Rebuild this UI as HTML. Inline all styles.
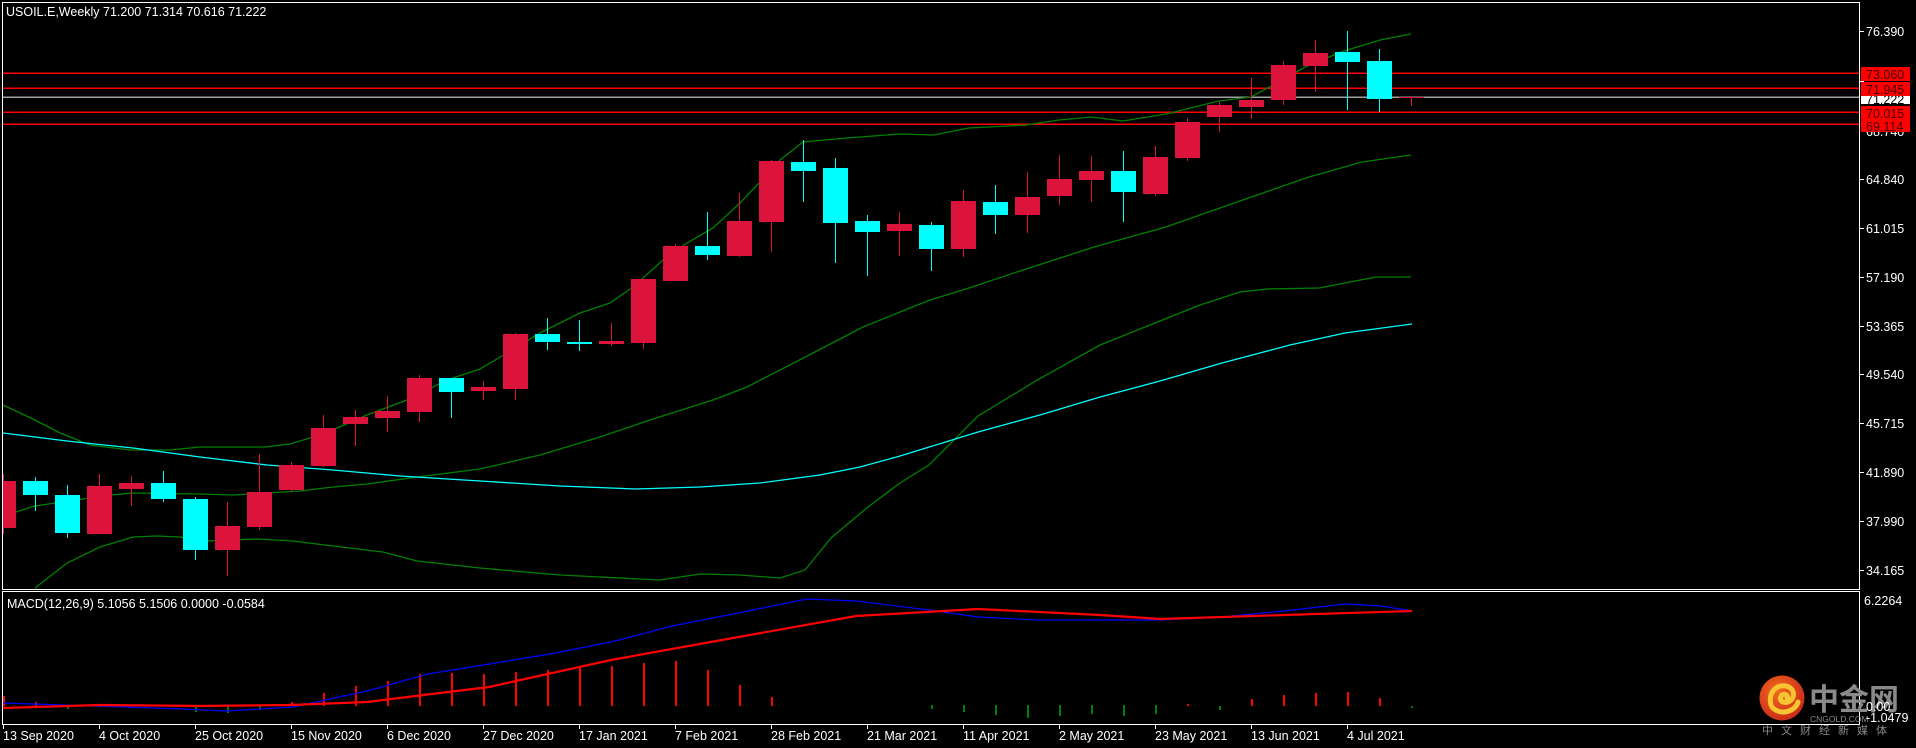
<!DOCTYPE html>
<html><head><meta charset="utf-8"><style>
html,body{margin:0;padding:0;background:#000;width:1916px;height:748px;overflow:hidden}
svg{display:block}
text{font-family:"Liberation Sans","Noto Sans CJK SC",sans-serif;font-size:12.5px;fill:#fff}
</style></head><body>
<svg width="1916" height="748" viewBox="0 0 1916 748" xmlns="http://www.w3.org/2000/svg" shape-rendering="crispEdges">
<rect width="1916" height="748" fill="#000"/>
<!-- frames -->
<rect x="2.5" y="2.5" width="1857" height="587" fill="none" stroke="#fff"/>
<rect x="2.5" y="591.5" width="1857" height="133" fill="none" stroke="#fff"/>

<!-- horizontal levels -->
<g stroke-width="1.5">
<line x1="3" x2="1859" y1="73" y2="73" stroke="#ff0000"/>
<line x1="3" x2="1859" y1="88" y2="88" stroke="#ff0000"/>
<line x1="3" x2="1859" y1="97" y2="97" stroke="#a0a0a0"/>
<line x1="3" x2="1859" y1="112" y2="112" stroke="#ff0000"/>
<line x1="3" x2="1859" y1="124" y2="124" stroke="#ff0000"/>
</g>

<!-- indicator lines -->
<g fill="none" stroke-width="1.3" shape-rendering="auto">
<polyline stroke="#008000" points="3,405 35,420 60,433 90,445 130,450 170,450 200,447 265,447 290,444 310,438 337,428 367,415 407,400 447,380 480,369 507,353 540,333 580,313 610,303 633,287 663,260 687,243 713,228 740,203 760,182 780,160 803,142 847,138 900,134 934,135 969,128 1026,125 1059,120 1091,117 1123,121 1166,114 1219,101 1251,97 1273,85 1305,67 1341,52 1380,40 1411,34"/>
<polyline stroke="#008000" points="16,512 35,506 83,499 110,495 133,493 200,494 233,495 267,493 300,491 333,487 367,484 417,477 480,469 540,455 600,437 650,420 713,400 747,387 813,353 863,327 900,312 930,300 966,289 1023,270 1094,247 1166,227 1237,202 1309,177 1362,162 1411,155"/>
<polyline stroke="#008000" points="35,588 67,563 100,547 133,537 157,536 180,537 207,541 257,539 293,541 333,546 383,552 417,561 480,568 560,575 600,577 660,580 700,574 740,575 780,578 805,570 831,538 868,507 900,483 929,465 978,416 1039,379 1100,345 1150,325 1200,305 1240,292 1267,289 1319,288 1376,277 1411,277"/>
<polyline stroke="#00ffff" points="3,433 67,441 133,448 200,457 267,465 333,470 400,476 480,481 560,486 636,489 700,487 760,483 820,475 860,467 900,456 978,432 1040,415 1100,397 1160,381 1222,363 1290,345 1345,333 1412,324"/>
</g>

<!-- candles -->
<g id="candles">
<!-- i0 --><rect x="3" y="474" width="1" height="60" fill="#dc143c"/><rect x="3" y="481" width="13" height="47" fill="#dc143c"/>
<rect x="35" y="477" width="1" height="34" fill="#00ffff"/><rect x="23" y="481" width="25" height="14" fill="#00ffff"/>
<rect x="67" y="485" width="1" height="53" fill="#00ffff"/><rect x="55" y="495" width="25" height="38" fill="#00ffff"/>
<rect x="99" y="474" width="1" height="60" fill="#dc143c"/><rect x="87" y="486" width="25" height="48" fill="#dc143c"/>
<rect x="131" y="476" width="1" height="30" fill="#dc143c"/><rect x="119" y="483" width="25" height="6" fill="#dc143c"/>
<rect x="163" y="471" width="1" height="31" fill="#00ffff"/><rect x="151" y="483" width="25" height="16" fill="#00ffff"/>
<rect x="195" y="497" width="1" height="63" fill="#00ffff"/><rect x="183" y="499" width="25" height="51" fill="#00ffff"/>
<rect x="227" y="502" width="1" height="74" fill="#dc143c"/><rect x="215" y="526" width="25" height="24" fill="#dc143c"/>
<rect x="259" y="454" width="1" height="76" fill="#dc143c"/><rect x="247" y="492" width="25" height="35" fill="#dc143c"/>
<rect x="291" y="462" width="1" height="30" fill="#dc143c"/><rect x="279" y="465" width="25" height="25" fill="#dc143c"/>
<rect x="323" y="415" width="1" height="52" fill="#dc143c"/><rect x="311" y="428" width="25" height="38" fill="#dc143c"/>
<rect x="355" y="410" width="1" height="36" fill="#dc143c"/><rect x="343" y="417" width="25" height="7" fill="#dc143c"/>
<rect x="387" y="396" width="1" height="36" fill="#dc143c"/><rect x="375" y="411" width="25" height="7" fill="#dc143c"/>
<rect x="419" y="375" width="1" height="47" fill="#dc143c"/><rect x="407" y="378" width="25" height="34" fill="#dc143c"/>
<rect x="451" y="378" width="1" height="40" fill="#00ffff"/><rect x="439" y="378" width="25" height="14" fill="#00ffff"/>
<rect x="483" y="381" width="1" height="19" fill="#dc143c"/><rect x="471" y="387" width="25" height="4" fill="#dc143c"/>
<rect x="515" y="333" width="1" height="67" fill="#dc143c"/><rect x="503" y="334" width="25" height="55" fill="#dc143c"/>
<rect x="547" y="318" width="1" height="32" fill="#00ffff"/><rect x="535" y="334" width="25" height="8" fill="#00ffff"/>
<rect x="579" y="320" width="1" height="31" fill="#00ffff"/><rect x="567" y="342" width="25" height="2" fill="#00ffff"/>
<rect x="611" y="323" width="1" height="23" fill="#dc143c"/><rect x="599" y="341" width="25" height="3" fill="#dc143c"/>
<rect x="643" y="279" width="1" height="70" fill="#dc143c"/><rect x="631" y="279" width="25" height="64" fill="#dc143c"/>
<rect x="675" y="244" width="1" height="37" fill="#dc143c"/><rect x="663" y="246" width="25" height="35" fill="#dc143c"/>
<rect x="707" y="212" width="1" height="48" fill="#00ffff"/><rect x="695" y="246" width="25" height="9" fill="#00ffff"/>
<rect x="739" y="193" width="1" height="64" fill="#dc143c"/><rect x="727" y="221" width="25" height="35" fill="#dc143c"/>
<rect x="771" y="160" width="1" height="92" fill="#dc143c"/><rect x="759" y="161" width="25" height="61" fill="#dc143c"/>
<rect x="803" y="140" width="1" height="62" fill="#00ffff"/><rect x="791" y="162" width="25" height="9" fill="#00ffff"/>
<rect x="835" y="158" width="1" height="105" fill="#00ffff"/><rect x="823" y="168" width="25" height="55" fill="#00ffff"/>
<rect x="867" y="215" width="1" height="61" fill="#00ffff"/><rect x="855" y="221" width="25" height="11" fill="#00ffff"/>
<rect x="899" y="212" width="1" height="44" fill="#dc143c"/><rect x="887" y="224" width="25" height="7" fill="#dc143c"/>
<rect x="931" y="222" width="1" height="49" fill="#00ffff"/><rect x="919" y="225" width="25" height="24" fill="#00ffff"/>
<rect x="963" y="190" width="1" height="67" fill="#dc143c"/><rect x="951" y="201" width="25" height="48" fill="#dc143c"/>
<rect x="995" y="185" width="1" height="49" fill="#00ffff"/><rect x="983" y="202" width="25" height="13" fill="#00ffff"/>
<rect x="1027" y="172" width="1" height="61" fill="#dc143c"/><rect x="1015" y="197" width="25" height="18" fill="#dc143c"/>
<rect x="1059" y="155" width="1" height="50" fill="#dc143c"/><rect x="1047" y="179" width="25" height="17" fill="#dc143c"/>
<rect x="1091" y="156" width="1" height="46" fill="#dc143c"/><rect x="1079" y="171" width="25" height="9" fill="#dc143c"/>
<rect x="1123" y="151" width="1" height="71" fill="#00ffff"/><rect x="1111" y="171" width="25" height="21" fill="#00ffff"/>
<rect x="1155" y="146" width="1" height="50" fill="#dc143c"/><rect x="1143" y="157" width="25" height="37" fill="#dc143c"/>
<rect x="1187" y="118" width="1" height="43" fill="#dc143c"/><rect x="1175" y="122" width="25" height="36" fill="#dc143c"/>
<rect x="1219" y="102" width="1" height="30" fill="#dc143c"/><rect x="1207" y="105" width="25" height="12" fill="#dc143c"/>
<rect x="1251" y="78" width="1" height="41" fill="#dc143c"/><rect x="1239" y="100" width="25" height="7" fill="#dc143c"/>
<rect x="1283" y="61" width="1" height="44" fill="#dc143c"/><rect x="1271" y="65" width="25" height="35" fill="#dc143c"/>
<rect x="1315" y="40" width="1" height="52" fill="#dc143c"/><rect x="1303" y="53" width="25" height="13" fill="#dc143c"/>
<rect x="1347" y="31" width="1" height="79" fill="#00ffff"/><rect x="1335" y="52" width="25" height="10" fill="#00ffff"/>
<rect x="1379" y="49" width="1" height="63" fill="#00ffff"/><rect x="1367" y="61" width="25" height="38" fill="#00ffff"/>
<rect x="1411" y="96" width="1" height="10" fill="#dc143c"/><rect x="1399" y="97" width="25" height="1" fill="#dc143c"/>
</g>

<!-- title -->
<text x="6" y="16">USOIL.E,Weekly  71.200 71.314 70.616 71.222</text>

<!-- price axis -->
<g>
<rect x="1860" y="31" width="4" height="1" fill="#fff"/><text x="1866" y="36">76.390</text>
<rect x="1860" y="179" width="4" height="1" fill="#fff"/><text x="1866" y="184">64.840</text>
<rect x="1860" y="228" width="4" height="1" fill="#fff"/><text x="1866" y="233">61.015</text>
<rect x="1860" y="277" width="4" height="1" fill="#fff"/><text x="1866" y="282">57.190</text>
<rect x="1860" y="326" width="4" height="1" fill="#fff"/><text x="1866" y="331">53.365</text>
<rect x="1860" y="374" width="4" height="1" fill="#fff"/><text x="1866" y="379">49.540</text>
<rect x="1860" y="423" width="4" height="1" fill="#fff"/><text x="1866" y="428">45.715</text>
<rect x="1860" y="472" width="4" height="1" fill="#fff"/><text x="1866" y="477">41.890</text>
<rect x="1860" y="521" width="4" height="1" fill="#fff"/><text x="1866" y="526">37.990</text>
<rect x="1860" y="570" width="4" height="1" fill="#fff"/><text x="1866" y="575">34.165</text>
<text x="1866" y="136">68.740</text>
<rect x="1860" y="81" width="4" height="1" fill="#fff"/>
<rect x="1861" y="96" width="49" height="8" fill="#fff"/><text x="1866" y="104" style="fill:#000">71.222</text>
<rect x="1861" y="67" width="49" height="14" fill="#ff0000"/><text x="1866" y="79" style="fill:#400">73.060</text>
<rect x="1861" y="82" width="49" height="14" fill="#ff0000"/><text x="1866" y="94" style="fill:#400">71.945</text>
<rect x="1861" y="106" width="49" height="13" fill="#ff0000"/><text x="1866" y="118" style="fill:#400">70.015</text>
<rect x="1861" y="119" width="49" height="13" fill="#ff0000"/><text x="1866" y="131" style="fill:#400">69.114</text>
</g>

<!-- MACD -->
<text x="7" y="608">MACD(12,26,9) 5.1056 5.1506 0.0000 -0.0584</text>
<text x="1864" y="605">6.2264</text>
<g>
<rect x="3" y="696" width="2" height="10" fill="#ff0000"/>
<rect x="35" y="702" width="2" height="4" fill="#ff0000"/>
<rect x="67" y="706" width="2" height="3" fill="#008000"/>
<rect x="99" y="704" width="2" height="3" fill="#008000"/>
<rect x="195" y="706" width="2" height="6" fill="#008000"/>
<rect x="227" y="706" width="2" height="7" fill="#008000"/>
<rect x="259" y="706" width="2" height="4" fill="#008000"/>
<rect x="291" y="702" width="2" height="4" fill="#ff0000"/>
<rect x="323" y="693" width="2" height="13" fill="#ff0000"/>
<rect x="355" y="686" width="2" height="20" fill="#ff0000"/>
<rect x="387" y="681" width="2" height="25" fill="#ff0000"/>
<rect x="419" y="674" width="2" height="32" fill="#ff0000"/>
<rect x="451" y="673" width="2" height="33" fill="#ff0000"/>
<rect x="483" y="674" width="2" height="32" fill="#ff0000"/>
<rect x="515" y="672" width="2" height="34" fill="#ff0000"/>
<rect x="547" y="670" width="2" height="36" fill="#ff0000"/>
<rect x="579" y="668" width="2" height="38" fill="#ff0000"/>
<rect x="611" y="666" width="2" height="40" fill="#ff0000"/>
<rect x="643" y="663" width="2" height="43" fill="#ff0000"/>
<rect x="675" y="661" width="2" height="45" fill="#ff0000"/>
<rect x="707" y="670" width="2" height="36" fill="#ff0000"/>
<rect x="739" y="685" width="2" height="21" fill="#ff0000"/>
<rect x="771" y="697" width="2" height="9" fill="#ff0000"/>
<rect x="931" y="705" width="2" height="4" fill="#008000"/>
<rect x="963" y="705" width="2" height="7" fill="#008000"/>
<rect x="995" y="705" width="2" height="10" fill="#008000"/>
<rect x="1027" y="705" width="2" height="13" fill="#008000"/>
<rect x="1059" y="705" width="2" height="11" fill="#008000"/>
<rect x="1091" y="705" width="2" height="9" fill="#008000"/>
<rect x="1123" y="705" width="2" height="11" fill="#008000"/>
<rect x="1155" y="705" width="2" height="9" fill="#008000"/>
<rect x="1187" y="704" width="2" height="2" fill="#ff0000"/>
<rect x="1219" y="706" width="2" height="4" fill="#008000"/>
<rect x="1251" y="699" width="2" height="7" fill="#ff0000"/>
<rect x="1283" y="695" width="2" height="11" fill="#ff0000"/>
<rect x="1315" y="693" width="2" height="13" fill="#ff0000"/>
<rect x="1347" y="692" width="2" height="14" fill="#ff0000"/>
<rect x="1379" y="698" width="2" height="8" fill="#ff0000"/>
<rect x="1411" y="706" width="2" height="2" fill="#008000"/>
</g>
<g fill="none" shape-rendering="auto">
<polyline stroke="#0000ff" stroke-width="1.2" points="3,703 183,709 226,711 293,707 367,691 428,674 489,664 550,654 611,642 672,626 733,614 807,599 856,601 929,610 978,617 1039,620 1100,620 1161,620 1222,617 1284,611 1345,604 1381,606 1412,611"/>
<polyline stroke="#ff0000" stroke-width="2.2" points="3,708 100,705 200,706 290,705 367,702 489,687 611,660 733,638 856,616 978,609 1100,615 1161,619 1284,615 1412,611"/>
</g>

<!-- date axis -->
<g>
<rect x="3" y="725" width="1" height="4" fill="#fff"/><text x="3" y="740">13 Sep 2020</text>
<rect x="99" y="725" width="1" height="4" fill="#fff"/><text x="99" y="740">4 Oct 2020</text>
<rect x="195" y="725" width="1" height="4" fill="#fff"/><text x="195" y="740">25 Oct 2020</text>
<rect x="291" y="725" width="1" height="4" fill="#fff"/><text x="291" y="740">15 Nov 2020</text>
<rect x="387" y="725" width="1" height="4" fill="#fff"/><text x="387" y="740">6 Dec 2020</text>
<rect x="483" y="725" width="1" height="4" fill="#fff"/><text x="483" y="740">27 Dec 2020</text>
<rect x="579" y="725" width="1" height="4" fill="#fff"/><text x="579" y="740">17 Jan 2021</text>
<rect x="675" y="725" width="1" height="4" fill="#fff"/><text x="675" y="740">7 Feb 2021</text>
<rect x="771" y="725" width="1" height="4" fill="#fff"/><text x="771" y="740">28 Feb 2021</text>
<rect x="867" y="725" width="1" height="4" fill="#fff"/><text x="867" y="740">21 Mar 2021</text>
<rect x="963" y="725" width="1" height="4" fill="#fff"/><text x="963" y="740">11 Apr 2021</text>
<rect x="1059" y="725" width="1" height="4" fill="#fff"/><text x="1059" y="740">2 May 2021</text>
<rect x="1155" y="725" width="1" height="4" fill="#fff"/><text x="1155" y="740">23 May 2021</text>
<rect x="1251" y="725" width="1" height="4" fill="#fff"/><text x="1251" y="740">13 Jun 2021</text>
<rect x="1347" y="725" width="1" height="4" fill="#fff"/><text x="1347" y="740">4 Jul 2021</text>
</g>

<!-- watermark -->
<g shape-rendering="auto">
<defs><radialGradient id="lg" cx="0.4" cy="0.35" r="0.7"><stop offset="0" stop-color="#f26a1b"/><stop offset="1" stop-color="#c8281a"/></radialGradient></defs>
<circle cx="1782" cy="698" r="22.5" fill="url(#lg)"/>
<path d="M1771,705 C1768,693 1776,684 1786,686 C1795,688 1796,699 1788,702 C1782,704 1778,699 1782,695 C1785,693 1789,696 1787,698 M1772,707 C1780,716 1795,712 1798,702" fill="none" stroke="#f7c531" stroke-width="5" stroke-linecap="round"/>
<text x="1809" y="710" style="font-size:30px;font-weight:bold;fill:#8a8a8a;font-family:'Noto Sans CJK SC',sans-serif">中金网</text>
<text x="1810" y="722" style="font-size:8.5px;fill:#8a8a8a">CNGOLD.COM</text>
<text x="1866" y="711" style="fill:#fff">0.00</text>
<text x="1866" y="722" style="fill:#fff">-1.0479</text>
<text x="1762" y="734" style="font-size:11px;fill:#8a8a8a;letter-spacing:8px;font-family:'Noto Sans CJK SC',sans-serif">中文财经新媒体</text>
</g>
</svg>
</body></html>
